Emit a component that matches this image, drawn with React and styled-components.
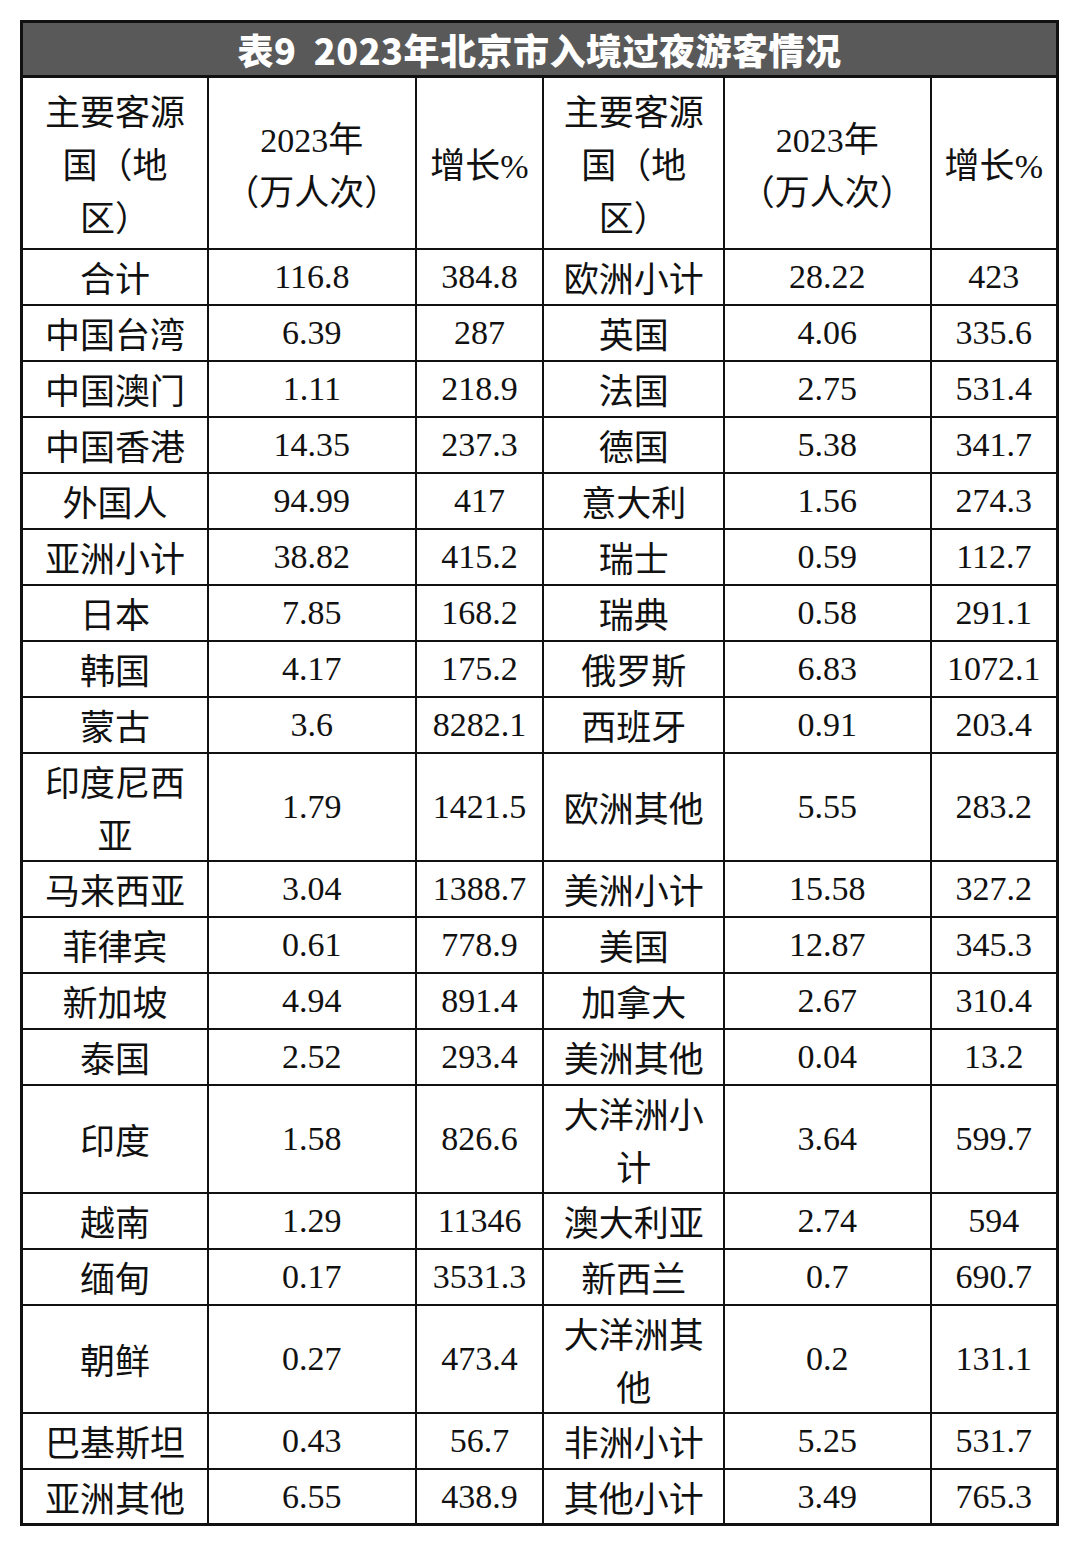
import React from 'react';
import styled, { createGlobalStyle } from 'styled-components';

const GlobalStyle = createGlobalStyle`
  body{
    margin:0;
    background:#fff;
  }
`;

const Page = styled.div`
  padding:20px 21px 20px 20px;
  width:1039px;
  color:#111;
`;

const TitleBar = styled.div`
  height:52px;
  border:3px solid #111;
  border-bottom:none;
  background:#595959;
  color:#fff;
  display:flex;
  align-items:center;
  justify-content:center;
  font-family:"Noto Sans CJK SC","Liberation Sans",sans-serif;
  font-weight:900;
  font-size:36px;
  letter-spacing:0.5px;
  white-space:pre;
`;

const Table = styled.table`
  table-layout:fixed;
  border-collapse:collapse;
  border:3px solid #111;
`;

const Row = styled.tr`
  height:${p => p.$h}px;
`;

const Cell = styled.td`
  border:2px solid #111;
  text-align:center;
  vertical-align:middle;
  padding:0 ${p => (p.$name ? 17 : 4)}px;
  font-family:${p => (p.$num
    ? '"Liberation Serif","DejaVu Serif","Times New Roman",serif'
    : '"Noto Sans CJK SC",sans-serif')};
  font-size:${p => (p.$num ? 34 : 35)}px;
  line-height:53px;
  font-weight:400;
`;

const Num = styled.span`
  font-family:"Liberation Serif","DejaVu Serif","Times New Roman",serif;
  font-size:34px;
  line-height:1;
`;

const left = [
  ['合计','116.8','384.8'],['中国台湾','6.39','287'],['中国澳门','1.11','218.9'],['中国香港','14.35','237.3'],
  ['外国人','94.99','417'],['亚洲小计','38.82','415.2'],['日本','7.85','168.2'],['韩国','4.17','175.2'],
  ['蒙古','3.6','8282.1'],['印度尼西亚','1.79','1421.5'],['马来西亚','3.04','1388.7'],['菲律宾','0.61','778.9'],
  ['新加坡','4.94','891.4'],['泰国','2.52','293.4'],['印度','1.58','826.6'],['越南','1.29','11346'],
  ['缅甸','0.17','3531.3'],['朝鲜','0.27','473.4'],['巴基斯坦','0.43','56.7'],['亚洲其他','6.55','438.9'],
];

const right = [
  ['欧洲小计','28.22','423'],['英国','4.06','335.6'],['法国','2.75','531.4'],['德国','5.38','341.7'],
  ['意大利','1.56','274.3'],['瑞士','0.59','112.7'],['瑞典','0.58','291.1'],['俄罗斯','6.83','1072.1'],
  ['西班牙','0.91','203.4'],['欧洲其他','5.55','283.2'],['美洲小计','15.58','327.2'],['美国','12.87','345.3'],
  ['加拿大','2.67','310.4'],['美洲其他','0.04','13.2'],['大洋洲小计','3.64','599.7'],['澳大利亚','2.74','594'],
  ['新西兰','0.7','690.7'],['大洋洲其他','0.2','131.1'],['非洲小计','5.25','531.7'],['其他小计','3.49','765.3'],
];

const tallRows = [9, 14, 17];
const colWidths = [187, 208, 128, 181, 207, 127];

const Header = () => (
  <>
    <Cell $name>主要客源国（地区）</Cell>
    <Cell><Num>2023</Num>年<br/>（万人次）</Cell>
    <Cell>增长<Num>%</Num></Cell>
  </>
);

const App = () => (
  <>
    <GlobalStyle />
    <Page>
      <TitleBar>表9  2023年北京市入境过夜游客情况</TitleBar>
      <Table>
        <colgroup>
          {colWidths.map((w, i) => <col key={i} style={{width:w}} />)}
        </colgroup>
        <tbody>
          <Row $h={172}>
            <Header />
            <Header />
          </Row>
          {left.map((l, i) => {
            const r = right[i];
            return (
              <Row key={i} $h={tallRows.includes(i) ? 108 : 56}>
                <Cell $name>{l[0]}</Cell>
                <Cell $num>{l[1]}</Cell>
                <Cell $num>{l[2]}</Cell>
                <Cell $name>{r[0]}</Cell>
                <Cell $num>{r[1]}</Cell>
                <Cell $num>{r[2]}</Cell>
              </Row>
            );
          })}
        </tbody>
      </Table>
    </Page>
  </>
);

export default App;
